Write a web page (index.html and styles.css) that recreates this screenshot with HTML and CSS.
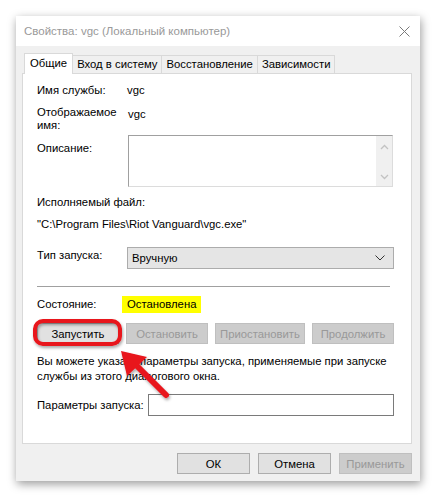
FILE: index.html
```html
<!DOCTYPE html>
<html lang="ru">
<head>
    <meta charset="UTF-8">
    <title>Свойства: vgc (Локальный компьютер)</title>
    <link rel="stylesheet" href="styles.css">
</head>
<body>
    <div class="window">
        <div class="titlebar">
            <span class="title">Свойства: vgc (Локальный компьютер)</span>
            <svg class="close-icon" width="11" height="11" viewBox="0 0 11 11">
                <path d="M0.5 0.5 L10.5 10.5 M10.5 0.5 L0.5 10.5" stroke="#7a7a7a" stroke-width="1" fill="none"/>
            </svg>
        </div>

        <div class="dialog-body">
            <div class="tabs">
                <div class="tab active">Общие</div>
                <div class="tab">Вход в систему</div>
                <div class="tab">Восстановление</div>
                <div class="tab">Зависимости</div>
            </div>

            <div class="panel">
                <div class="field row-name">
                    <span class="label">Имя службы:</span>
                    <span class="value">vgc</span>
                </div>
                <div class="field row-display">
                    <span class="label label-wrap">Отображаемое имя:</span>
                    <span class="value">vgc</span>
                </div>
                <div class="field row-desc">
                    <span class="label">Описание:</span>
                    <div class="textbox">
                        <div class="scrollbar">
                            <svg width="9" height="6" viewBox="0 0 9 6"><path d="M1 5 L4.5 1.5 L8 5" stroke="#c2c2c2" stroke-width="1.3" fill="none"/></svg>
                            <svg width="9" height="6" viewBox="0 0 9 6"><path d="M1 1 L4.5 4.5 L8 1" stroke="#c2c2c2" stroke-width="1.3" fill="none"/></svg>
                        </div>
                    </div>
                </div>
                <div class="line row-exe">Исполняемый файл:</div>
                <div class="line row-path">"C:\Program Files\Riot Vanguard\vgc.exe"</div>
                <div class="field row-start">
                    <span class="label">Тип запуска:</span>
                    <div class="select">
                        <span>Вручную</span>
                        <svg width="10" height="6" viewBox="0 0 10 6"><path d="M0.5 0.5 L5 5 L9.5 0.5" stroke="#333" stroke-width="1" fill="none"/></svg>
                    </div>
                </div>
                <div class="separator"></div>
                <div class="field row-state">
                    <span class="label">Состояние:</span>
                    <span class="state">Остановлена</span>
                </div>
                <div class="service-buttons">
                    <button class="btn btn-start">Запустить</button>
                    <button class="btn" disabled>Остановить</button>
                    <button class="btn btn-wide" disabled>Приостановить</button>
                    <button class="btn" disabled>Продолжить</button>
                </div>
                <p class="hint">Вы можете указать параметры запуска, применяемые при запуске службы из этого диалогового окна.</p>
                <div class="field row-params">
                    <span class="label label-params">Параметры запуска:</span>
                    <div class="input"></div>
                </div>
            </div>

            <div class="footer">
                <button class="btn btn-footer">ОК</button>
                <button class="btn btn-footer">Отмена</button>
                <button class="btn btn-footer" disabled>Применить</button>
            </div>
        </div>
    </div>

    <!-- annotation: red ring around "Запустить" and pointing arrow -->
    <svg class="annotation" width="436" height="498" viewBox="0 0 436 498">
        <defs>
            <filter id="shadow" x="-20%" y="-20%" width="140%" height="140%">
                <feDropShadow dx="1" dy="2" stdDeviation="1.5" flood-color="#000" flood-opacity="0.35"/>
            </filter>
        </defs>
        <g filter="url(#shadow)">
            <rect x="35" y="321" width="85" height="23" rx="8" ry="8" fill="none" stroke="#e8141b" stroke-width="4"/>
            <path d="M135 364 L166 395" stroke="#e8141b" stroke-width="6" stroke-linecap="round"/>
            <polygon points="121,351 147,357 127,376" fill="#e8141b"/>
        </g>
    </svg>
</body>
</html>
```

FILE: styles.css
```css
* {
    margin: 0;
    padding: 0;
    box-sizing: border-box;
}

body {
    font-family: "Liberation Sans", Arial, sans-serif;
    font-size: 11.3px;
    line-height: 15px;
    color: #000;
    background: #fff;
    padding: 16px;
    position: relative;
    width: 436px;
    height: 498px;
}

.window {
    width: 404px;
    height: 465px;
    background: #f0f0f0;
    box-shadow: 1px 3px 9px rgba(0, 0, 0, 0.4);
    display: flex;
    flex-direction: column;
}

.titlebar {
    height: 30px;
    background: #fff;
    display: flex;
    align-items: center;
    justify-content: space-between;
    padding: 0 10px 0 8px;
}

.title {
    color: #999;
    font-size: 11.5px;
}

.dialog-body {
    padding: 7px 8px 0 6px;
}

.tabs {
    display: flex;
    align-items: flex-end;
    height: 20px;
    padding-left: 2px;
}

.tab {
    height: 18px;
    line-height: 16px;
    padding: 0 4px;
    border: 1px solid #d9d9d9;
    border-bottom: none;
    background: #f0f0f0;
    margin-left: -1px;
}

.tab.active {
    height: 21px;
    line-height: 19px;
    padding: 0 5px;
    margin-bottom: -1px;
    background: #fff;
    margin-left: 0;
    position: relative;
    z-index: 1;
}

.panel {
    height: 371px;
    background: #fff;
    border: 1px solid #d9d9d9;
    padding: 9px 17px 0 14px;
}

.field {
    display: flex;
    align-items: flex-start;
}

.label {
    width: 90px;
    flex-shrink: 0;
    white-space: nowrap;
}

.row-display {
    margin-top: 8px;
}

.label-wrap {
    white-space: normal;
    line-height: 13px;
    width: 80px;
    margin-right: 10px;
}

.row-display .value {
    margin-top: 1px;
    margin-left: 1px;
}

.row-desc {
    margin-top: 3px;
}

.row-desc .label {
    margin-top: 6px;
    width: 91px;
}

.textbox {
    width: 265px;
    height: 52px;
    border: 1px solid #dcdcdc;
    border-top-color: #a0a0a0;
    border-left-color: #a0a0a0;
    display: flex;
    justify-content: flex-end;
}

.scrollbar {
    width: 16px;
    background: #f0f0f0;
    display: flex;
    flex-direction: column;
    align-items: center;
    justify-content: space-between;
    padding: 8px 0 6px;
}

.row-exe {
    margin-top: 8px;
}

.row-path {
    margin-top: 7px;
}

.row-start {
    margin-top: 15px;
}

.row-start .label {
    margin-top: 1px;
}

.select {
    width: 267px;
    height: 22px;
    background: #e5e5e5;
    border: 1px solid #acacac;
    display: flex;
    align-items: center;
    justify-content: space-between;
    padding: 0 8px 0 4px;
}

.separator {
    height: 1px;
    background: #a0a0a0;
    margin: 17px 4px 0 0;
}

.row-state {
    margin-top: 9px;
    line-height: 17px;
}

.row-state .label {
    width: 85px;
}

.state {
    background: #ffff00;
    padding: 0 5px;
    height: 17px;
}

.service-buttons {
    display: flex;
    gap: 7px;
    margin-top: 10px;
}

.btn {
    font-family: inherit;
    font-size: 11.3px;
    height: 21px;
    width: 82px;
    background: #e1e1e1;
    border: 1px solid #adadad;
    color: #000;
}

.btn:disabled {
    background: #cccccc;
    border-color: #bfbfbf;
    color: #999;
}

.btn-wide {
    width: 90px;
}

.hint {
    margin-top: 10px;
}

.row-params {
    margin-top: 10px;
}

.label-params {
    width: 111px;
    margin-top: 4px;
}

.input {
    width: 246px;
    height: 22px;
    border: 1px solid #7a7a7a;
}

.footer {
    display: flex;
    justify-content: flex-end;
    gap: 8px;
    margin-top: 9px;
}

.btn-footer {
    width: 73px;
}

.annotation {
    position: absolute;
    top: 0;
    left: 0;
    pointer-events: none;
}
```
